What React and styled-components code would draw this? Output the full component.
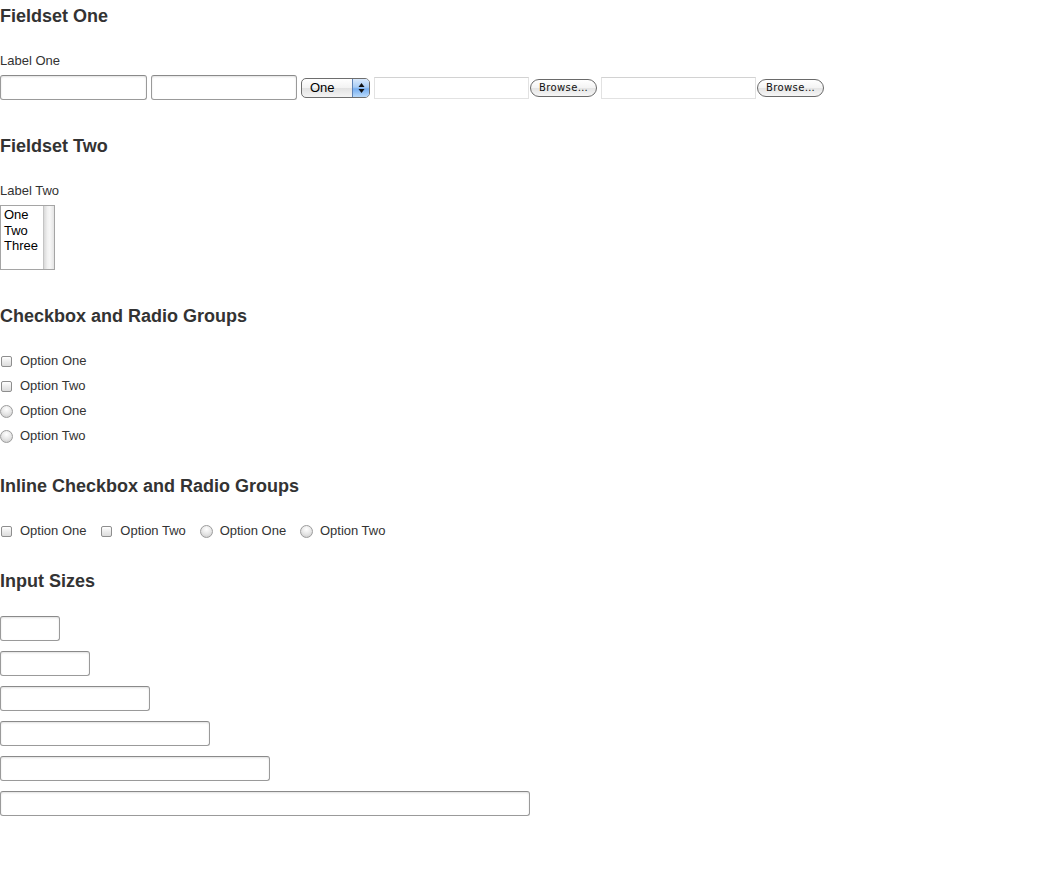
import React from 'react';
import styled, { createGlobalStyle } from 'styled-components';

const GlobalStyle = createGlobalStyle`
  html, body {
    margin: 0;
    padding: 0;
    background: #fff;
  }

  body {
    font-family: "Liberation Sans", Arial, Helvetica, sans-serif;
    font-size: 13px;
    color: #333;
  }
`;

const listItems = ['One', 'Two', 'Three'];
const sizes = [60, 90, 150, 210, 270, 530];

const Field = ({ type, label, name }) => (
  <OptionLabel>
    <ChoiceInput type={type} name={name} />
    {label}
  </OptionLabel>
);

const FileField = () => (
  <FileWrap>
    <FilePath />
    <BrowseButton type="button">Browse…</BrowseButton>
  </FileWrap>
);

const App = () => {
  return (
    <>
      <GlobalStyle />
      <Form>
        <Fieldset>
          <Legend>Fieldset One</Legend>
          <FieldLabel>Label One</FieldLabel>
          <ControlRow $spaced>
            <TextInput $w={147} />
            <TextInput $w={146} />
            <SelectWrap>
              <NativeSelect defaultValue="One">
                <option>One</option>
                <option>Two</option>
                <option>Three</option>
              </NativeSelect>
              <Stepper>
                <svg width="7" height="12" viewBox="0 0 7 12">
                  <path d="M3.5 1 L6.5 5 L0.5 5 Z" fill="#111" />
                  <path d="M3.5 11 L6.5 7 L0.5 7 Z" fill="#111" />
                </svg>
              </Stepper>
            </SelectWrap>
            <FileField />
            <FileField />
          </ControlRow>
        </Fieldset>

        <Fieldset>
          <Legend>Fieldset Two</Legend>
          <FieldLabel>Label Two</FieldLabel>
          <ControlRow $spaced>
            <ListBox>
              <ListItems>
                {listItems.map((item) => (
                  <ListItem key={item}>{item}</ListItem>
                ))}
              </ListItems>
              <ScrollTrack />
            </ListBox>
          </ControlRow>
        </Fieldset>

        <Fieldset>
          <Legend>Checkbox and Radio Groups</Legend>
          <OptionStack>
            <Field type="checkbox" label="Option One" />
            <Field type="checkbox" label="Option Two" />
            <Field type="radio" name="stacked" label="Option One" />
            <Field type="radio" name="stacked" label="Option Two" />
          </OptionStack>
        </Fieldset>

        <Fieldset>
          <Legend>Inline Checkbox and Radio Groups</Legend>
          <OptionInline>
            <Field type="checkbox" label="Option One" />
            <Field type="checkbox" label="Option Two" />
            <Field type="radio" name="inline" label="Option One" />
            <Field type="radio" name="inline" label="Option Two" />
          </OptionInline>
        </Fieldset>

        <Fieldset>
          <Legend>Input Sizes</Legend>
          <SizeStack>
            {sizes.map((w) => (
              <TextInput key={w} $w={w} />
            ))}
          </SizeStack>
        </Fieldset>
      </Form>
    </>
  );
};

export default App;

const Form = styled.form`
  padding-top: 5px;
`;

const Fieldset = styled.fieldset`
  margin: 0 0 31px;
  padding: 0;
  border: 0;
  min-width: 0;
`;

const Legend = styled.h2`
  margin: 0 0 24px;
  font-size: 18px;
  line-height: 22px;
  font-weight: bold;
  color: #333;
`;

const FieldLabel = styled.label`
  display: block;
  line-height: 18px;
  padding-top: 1px;
  margin-bottom: 5px;
  color: #333;
`;

const ControlRow = styled.div`
  display: flex;
  align-items: center;
  gap: 4px;
  padding-bottom: ${(p) => (p.$spaced ? '4px' : '0')};
`;

const TextInput = styled.input.attrs({ type: 'text' })`
  box-sizing: border-box;
  width: ${(p) => p.$w}px;
  height: 25px;
  margin: 0;
  padding: 2px 4px;
  border: 1px solid #9a9a9a;
  border-top-color: #8a8a8a;
  border-radius: 3px;
  background: #fff;
  box-shadow: inset 0 1px 2px rgba(0, 0, 0, 0.12);
  font: 13px "Liberation Sans", Arial, sans-serif;
  outline: none;
`;

const SelectWrap = styled.div`
  box-sizing: border-box;
  display: flex;
  width: 69px;
  height: 20px;
  border: 1px solid #6e6e6e;
  border-radius: 5px;
  overflow: hidden;
  background: linear-gradient(#ffffff, #f2f2f2 50%, #e2e2e2 51%, #f4f4f4);
`;

const NativeSelect = styled.select`
  flex: 1;
  min-width: 0;
  appearance: none;
  border: 0;
  margin: 0;
  padding: 0 0 0 8px;
  background: transparent;
  font: 13px "Liberation Sans", Arial, sans-serif;
  color: #000;
  outline: none;
`;

const Stepper = styled.span`
  display: flex;
  align-items: center;
  justify-content: center;
  width: 16px;
  border-left: 1px solid #5d82b5;
  background: linear-gradient(#d9e9fc, #a9cdf5 45%, #76aef0 55%, #b9dafb);
`;

const FileWrap = styled.div`
  display: flex;
  align-items: center;
  gap: 1px;
`;

const FilePath = styled.span`
  box-sizing: border-box;
  width: 155px;
  height: 22px;
  border: 1px solid #e2e2e2;
  border-top-color: #d2d2d2;
  background: #fff;
`;

const BrowseButton = styled.button`
  box-sizing: border-box;
  width: 67px;
  height: 18px;
  margin: 0;
  padding: 0;
  border: 1px solid #6a6a6a;
  border-radius: 9px;
  background: linear-gradient(#ffffff, #f3f3f3 50%, #e4e4e4 51%, #f6f6f6);
  font: 10px "DejaVu Sans", sans-serif;
  letter-spacing: 0.4px;
  color: #111;
  line-height: 16px;
`;

const ListBox = styled.div`
  box-sizing: border-box;
  display: flex;
  width: 55px;
  height: 65px;
  border: 1px solid #a5a5a5;
  background: #fff;
`;

const ListItems = styled.ul`
  flex: 1;
  margin: 0;
  padding: 1px 0 0 3px;
  list-style: none;
`;

const ListItem = styled.li`
  font-size: 13px;
  line-height: 15.5px;
  color: #000;
`;

const ScrollTrack = styled.div`
  width: 10px;
  border-left: 1px solid #c4c4c4;
  background: linear-gradient(to right, #d9d9d9, #f1f1f1 35%, #f7f7f7 60%, #e4e4e4);
`;

const OptionStack = styled.div`
  display: flex;
  flex-direction: column;
  gap: 7px;
`;

const OptionInline = styled.div`
  display: flex;
  gap: 13.8px;
`;

const OptionLabel = styled.label`
  box-sizing: border-box;
  display: flex;
  align-items: center;
  height: 18px;
  padding-top: 2px;
  line-height: 16px;
  color: #333;
`;

const ChoiceInput = styled.input`
  appearance: none;
  box-sizing: border-box;
  flex: none;
  margin: 0 8px 0 1px;
  width: 11px;
  height: 11px;
  border: 1px solid #8e8e8e;
  border-radius: 2px;
  background: linear-gradient(#ffffff, #ececec 50%, #dcdcdc);

  &[type='radio'] {
    margin: 0 7px 0 0;
    width: 13px;
    height: 13px;
    border-color: #9c9c9c;
    border-radius: 50%;
    background: radial-gradient(circle at 50% 30%, #ffffff, #e4e4e4 55%, #c6c6c6);
  }
`;

const SizeStack = styled.div`
  display: flex;
  flex-direction: column;
  align-items: flex-start;
  gap: 10px;
`;
